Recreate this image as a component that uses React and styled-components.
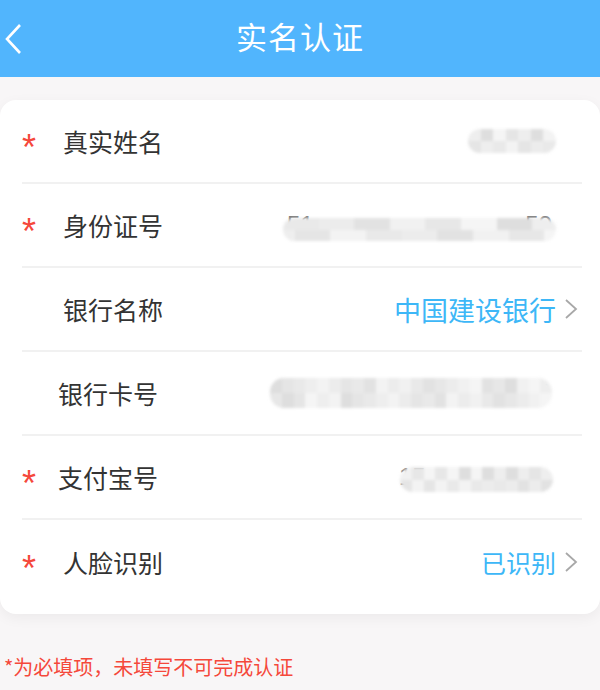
import React from 'react'
import styled, { createGlobalStyle } from 'styled-components'

const GlobalStyle = createGlobalStyle`
  html, body {
    margin: 0;
    padding: 0;
    background: #f8f6f7;
    font-family: "Noto Sans CJK SC", "Noto Sans", sans-serif;
  }
`

const Page = styled.div`
  width: 600px;
  min-height: 690px;
  background: #f8f6f7;
  overflow: hidden;
`

const Header = styled.div`
  display: flex;
  align-items: center;
  justify-content: center;
  position: relative;
  height: 77px;
  box-sizing: border-box;
  padding-bottom: 7px;
  background: #51b5fd;
  color: #fff;
  font-size: 31px;
  letter-spacing: 1px;
`

const Back = styled.svg`
  position: absolute;
  left: 4px;
  top: 22px;
`

const Card = styled.div`
  margin-top: 23px;
  background: #fff;
  border-radius: 16px;
  padding-bottom: 10px;
  box-shadow: 0 4px 14px rgba(0, 0, 0, 0.05);
`

const Row = styled.div`
  display: flex;
  align-items: center;
  height: 84px;
  margin: 0 18px 0 22px;
  border-bottom: ${p => (p.last ? 'none' : '2px solid #f1f1f1')};
  box-sizing: border-box;
`

const Star = styled.span`
  width: ${p => p.w}px;
  flex-shrink: 0;
  color: #f5483b;
  font-family: "Liberation Sans", sans-serif;
  font-size: 36px;
  line-height: 1;
  padding-top: 13px;
`

const Label = styled.span`
  color: #333;
  font-size: 25px;
  margin-right: auto;
`

const Value = styled.span`
  color: #3db7f7;
  font-size: ${p => p.size}px;
  margin-right: 8px;
`

const Chevron = styled.svg`
  margin-right: 4px;
`

const Masked = styled.div`
  position: relative;
  margin-right: ${p => p.mr}px;
  width: ${p => p.w}px;
  height: ${p => p.h}px;
`

const Digits = styled.span`
  display: flex;
  justify-content: space-between;
  align-items: center;
  height: 100%;
  padding: 0 4px;
  color: #777;
  font-size: 24px;
  font-family: "Liberation Sans", sans-serif;
`

const Blur = styled.div`
  position: absolute;
  top: ${p => p.top}px;
  left: ${p => p.lx}px;
  right: 0;
  bottom: 0;
  display: grid;
  grid-template-columns: repeat(${p => p.cols}, 1fr);
  border-radius: 14px;
  overflow: hidden;
  filter: blur(1.4px);
`

const Cell = styled.div`
  background: ${p => p.c};
`

const shades = ['#ececec', '#e2e2e2', '#f1f1f1', '#e7e7e7', '#f5f5f5', '#dedede', '#eeeeee', '#e5e5e5', '#f3f3f3', '#e9e9e9']

function Mosaic({ w, h, mr, left, right, seed = 1, top = 0, lx = 0 }) {
  const cols = Math.round((w - lx) / 12)
  const cells = []
  for (let i = 0; i < cols * 2; i++) {
    cells.push(shades[(i * 7 + seed * 3 + (i % 3) * seed) % shades.length])
  }
  return (
    <Masked w={w} h={h} mr={mr}>
      <Digits>
        <span>{left}</span>
        <span>{right}</span>
      </Digits>
      <Blur cols={cols} top={top} lx={lx}>
        {cells.map((c, i) => (
          <Cell key={i} c={c} />
        ))}
      </Blur>
    </Masked>
  )
}

const Arrow = () => (
  <Chevron width="14" height="22" viewBox="0 0 14 22">
    <polyline points="2,2 12,11 2,20" fill="none" stroke="#a8a8a8" strokeWidth="1.8" />
  </Chevron>
)

const Note = styled.div`
  margin-top: 38px;
  padding-left: 4px;
  color: #f5483b;
  font-size: 20px;
`

export default function App() {
  return (
    <Page>
      <GlobalStyle />
      <Header>
        <Back width="22" height="34" viewBox="0 0 22 34">
          <polyline points="16,3 3,17 16,31" fill="none" stroke="#fff" strokeWidth="2.6" />
        </Back>
        实名认证
      </Header>
      <Card>
        <Row>
          <Star w={41}>*</Star>
          <Label>真实姓名</Label>
          <Mosaic w={88} h={24} mr={26} seed={2} />
        </Row>
        <Row>
          <Star w={41}>*</Star>
          <Label>身份证号</Label>
          <Mosaic w={273} h={32} mr={26} left="51" right="59" seed={3} top={9} lx={0} />
        </Row>
        <Row>
          <Star w={41} />
          <Label>银行名称</Label>
          <Value size={27}>中国建设银行</Value>
          <Arrow />
        </Row>
        <Row>
          <Star w={36} />
          <Label>银行卡号</Label>
          <Mosaic w={282} h={30} mr={30} right="7" seed={5} />
        </Row>
        <Row>
          <Star w={36}>*</Star>
          <Label>支付宝号</Label>
          <Mosaic w={158} h={30} mr={29} left="15" seed={4} top={5} lx={5} />
        </Row>
        <Row last>
          <Star w={41}>*</Star>
          <Label>人脸识别</Label>
          <Value size={25}>已识别</Value>
          <Arrow />
        </Row>
      </Card>
      <Note>*为必填项，未填写不可完成认证</Note>
    </Page>
  )
}
